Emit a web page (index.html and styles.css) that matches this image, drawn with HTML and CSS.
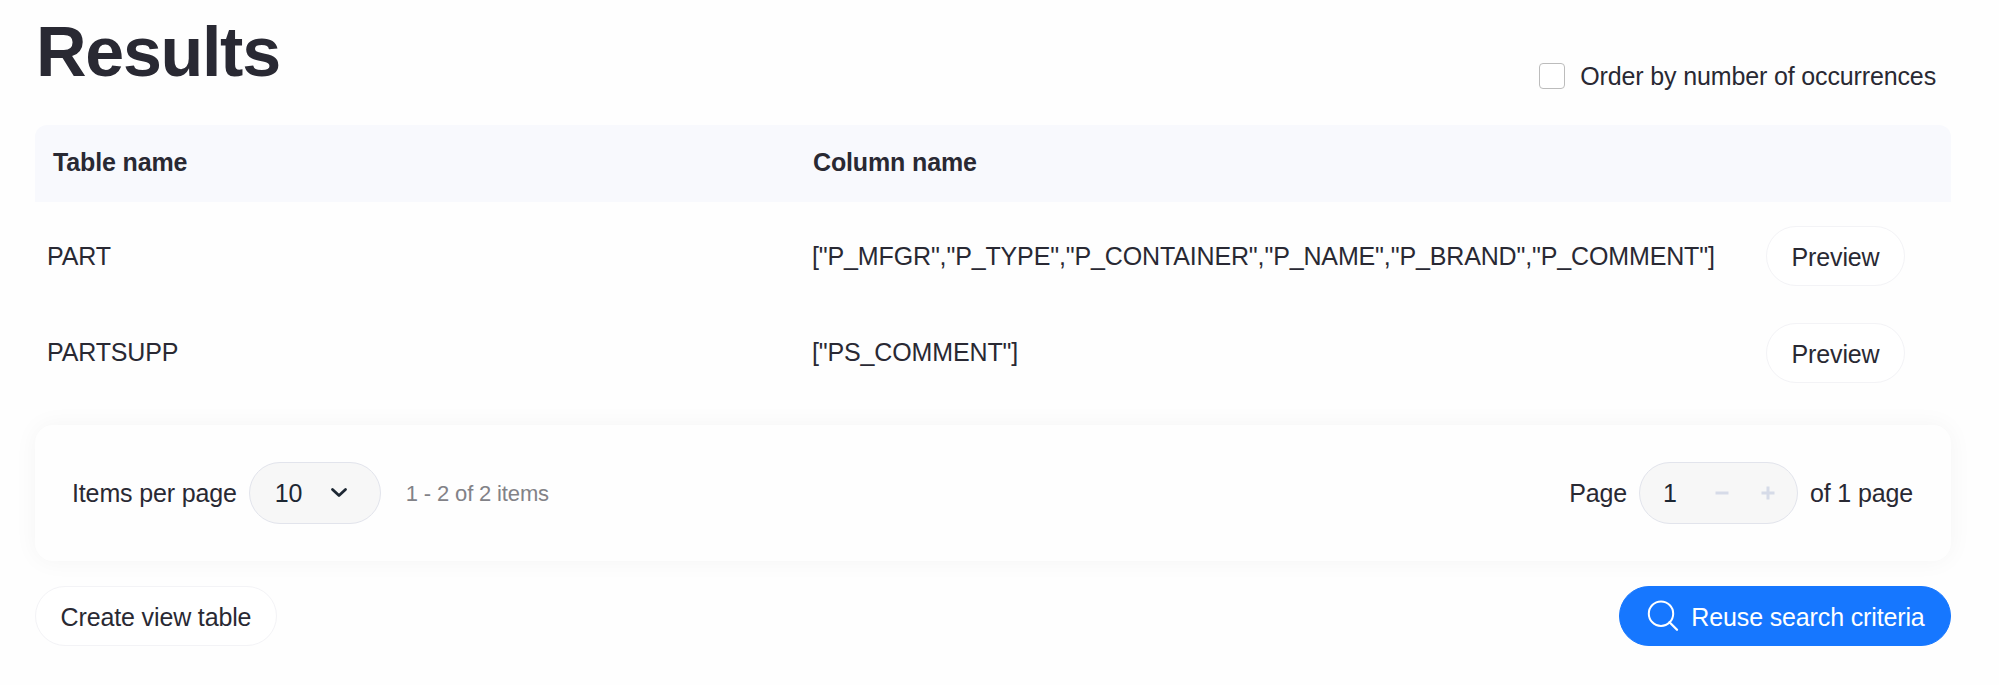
FILE: index.html
```html
<!DOCTYPE html>
<html lang="en">
<head>
<meta charset="utf-8">
<title>Results</title>
<link rel="stylesheet" href="styles.css">
</head>
<body>
<main class="results">
  <header class="top">
    <h1 class="title">Results</h1>
    <label class="order"><input class="check" type="checkbox"><span class="order-text">Order by number of occurrences</span></label>
  </header>

  <section class="table">
    <div class="row head"><span class="head-name">Table name</span><span class="head-col">Column name</span></div>
    <div class="row"><span class="name">PART</span><span class="cols">["P_MFGR","P_TYPE","P_CONTAINER","P_NAME","P_BRAND","P_COMMENT"]</span><button class="btn preview">Preview</button></div>
    <div class="row last"><span class="name">PARTSUPP</span><span class="cols">["PS_COMMENT"]</span><button class="btn preview">Preview</button></div>
  </section>

  <nav class="pager">
    <div class="group">
      <span class="per-page">Items per page</span>
      <div class="pill select"><span class="ten">10</span>
        <svg class="chevron" viewBox="0 0 18 12"><path d="M2.500 2.500 9 8.500l6.500-6" fill="none" stroke="#1d2733" stroke-width="2.800" stroke-linecap="round" stroke-linejoin="round"/></svg>
      </div>
      <span class="count">1 - 2 of 2 items</span>
    </div>
    <div class="group">
      <span class="page">Page</span>
      <div class="pill stepper"><span class="one">1</span>
        <svg class="step" viewBox="0 0 14 14"><path d="M.5 7h13" stroke="#d6dbe8" stroke-width="3"/></svg>
        <svg class="step" viewBox="0 0 14 14"><path d="M.5 7h13M7 .5v13" stroke="#d6dbe8" stroke-width="3"/></svg>
      </div>
      <span class="of-page">of 1 page</span>
    </div>
  </nav>

  <footer class="actions">
    <button class="btn create"><span class="create-text">Create view table</span></button>
    <button class="btn reuse">
      <svg class="search" viewBox="0 0 32 32"><circle cx="14" cy="13.700" r="12.200" fill="none" stroke="#fff" stroke-width="2"/><path d="M22.500 22.200 30 29.700" stroke="#fff" stroke-width="2.300" stroke-linecap="round"/></svg>
      <span class="reuse-text">Reuse search criteria</span>
    </button>
  </footer>
</main>
</body>
</html>
```
FILE: styles.css
```css
* {
  box-sizing: border-box;
}

body {
  margin: 0;
  background: #fefefe;
  color: #292933;
  font: 25px/30px "Liberation Sans", Arial, sans-serif;
  letter-spacing: -0.14px;
  white-space: nowrap;
}

.results {
  display: flex;
  flex-direction: column;
  height: 685px;
  padding: 0 48px 0 35px;
}

.top {
  display: flex;
  justify-content: space-between;
  height: 125px;
}

.title {
  margin: 12px 0 0;
  padding-left: 1px;
  font-size: 70px;
  line-height: 80px;
  letter-spacing: -1.300px;
}

.order {
  display: flex;
  align-items: center;
  gap: 15px;
  height: 30px;
  margin: 61px 15px 0 0;
}

.check {
  appearance: none;
  width: 26px;
  height: 26px;
  margin: 0;
  border: 1px solid #bcbcbc;
  border-radius: 4px;
  background: #fff;
}

.table {
  height: 300px;
}

.row {
  display: grid;
  grid-template-columns: 777px 1fr 139px;
  align-items: center;
  height: 96px;
  padding: 0 46px 0 0;
}

.head {
  height: 77px;
  margin-bottom: 6px;
  padding-bottom: 3px;
  border-radius: 12px 12px 0 0;
  background: #f8f9fd;
  font-weight: bold;
}

.head-name {
  padding-left: 18px;
}

.head-col {
  padding-left: 1px;
}

.last {
  height: 97px;
}

.name,
.cols {
  padding-bottom: 1px;
}

.last .name,
.last .cols {
  padding-bottom: 2px;
}

.name {
  padding-left: 12px;
}

.btn {
  display: flex;
  align-items: center;
  justify-content: center;
  height: 60px;
  padding: 2px 0 0;
  border: 1px solid #f3f3f6;
  border-radius: 30px;
  background: #fff;
  color: inherit;
  font: inherit;
  letter-spacing: inherit;
}

.pager {
  display: flex;
  align-items: center;
  justify-content: space-between;
  height: 136px;
  padding: 0 38px 0 37px;
  border-radius: 18px;
  background: #fefefe;
  box-shadow: 0 0 24px rgba(0, 0, 0, 0.045);
}

.group {
  display: flex;
  align-items: center;
}

.pill {
  display: flex;
  align-items: center;
  height: 62px;
  border: 1px solid #e2e4ec;
  border-radius: 31px;
  background: #f7f7f7;
  color: #1d2733;
}

.select {
  width: 132px;
  margin: 0 25px 0 12px;
  padding-left: 25px;
}

.chevron {
  width: 18px;
  height: 12px;
  margin-left: 28px;
}

.count {
  padding-top: 1px;
  color: #828287;
  font-size: 22px;
  letter-spacing: -0.150px;
}

.stepper {
  width: 159px;
  margin: 0 12px;
  padding-left: 23px;
}

.one {
  width: 52px;
}

.step {
  flex: none;
  width: 14px;
  height: 14px;
}

.one + .step {
  margin-right: 32px;
}

.actions {
  display: flex;
  justify-content: space-between;
  margin-top: 25px;
}

.create {
  width: 242px;
}

.reuse {
  gap: 12px;
  width: 332px;
  border-color: #1677ff;
  background: #1677ff;
  color: #fff;
}

.search {
  width: 32px;
  height: 32px;
  margin: -3px 0 0 2px;
}
```
